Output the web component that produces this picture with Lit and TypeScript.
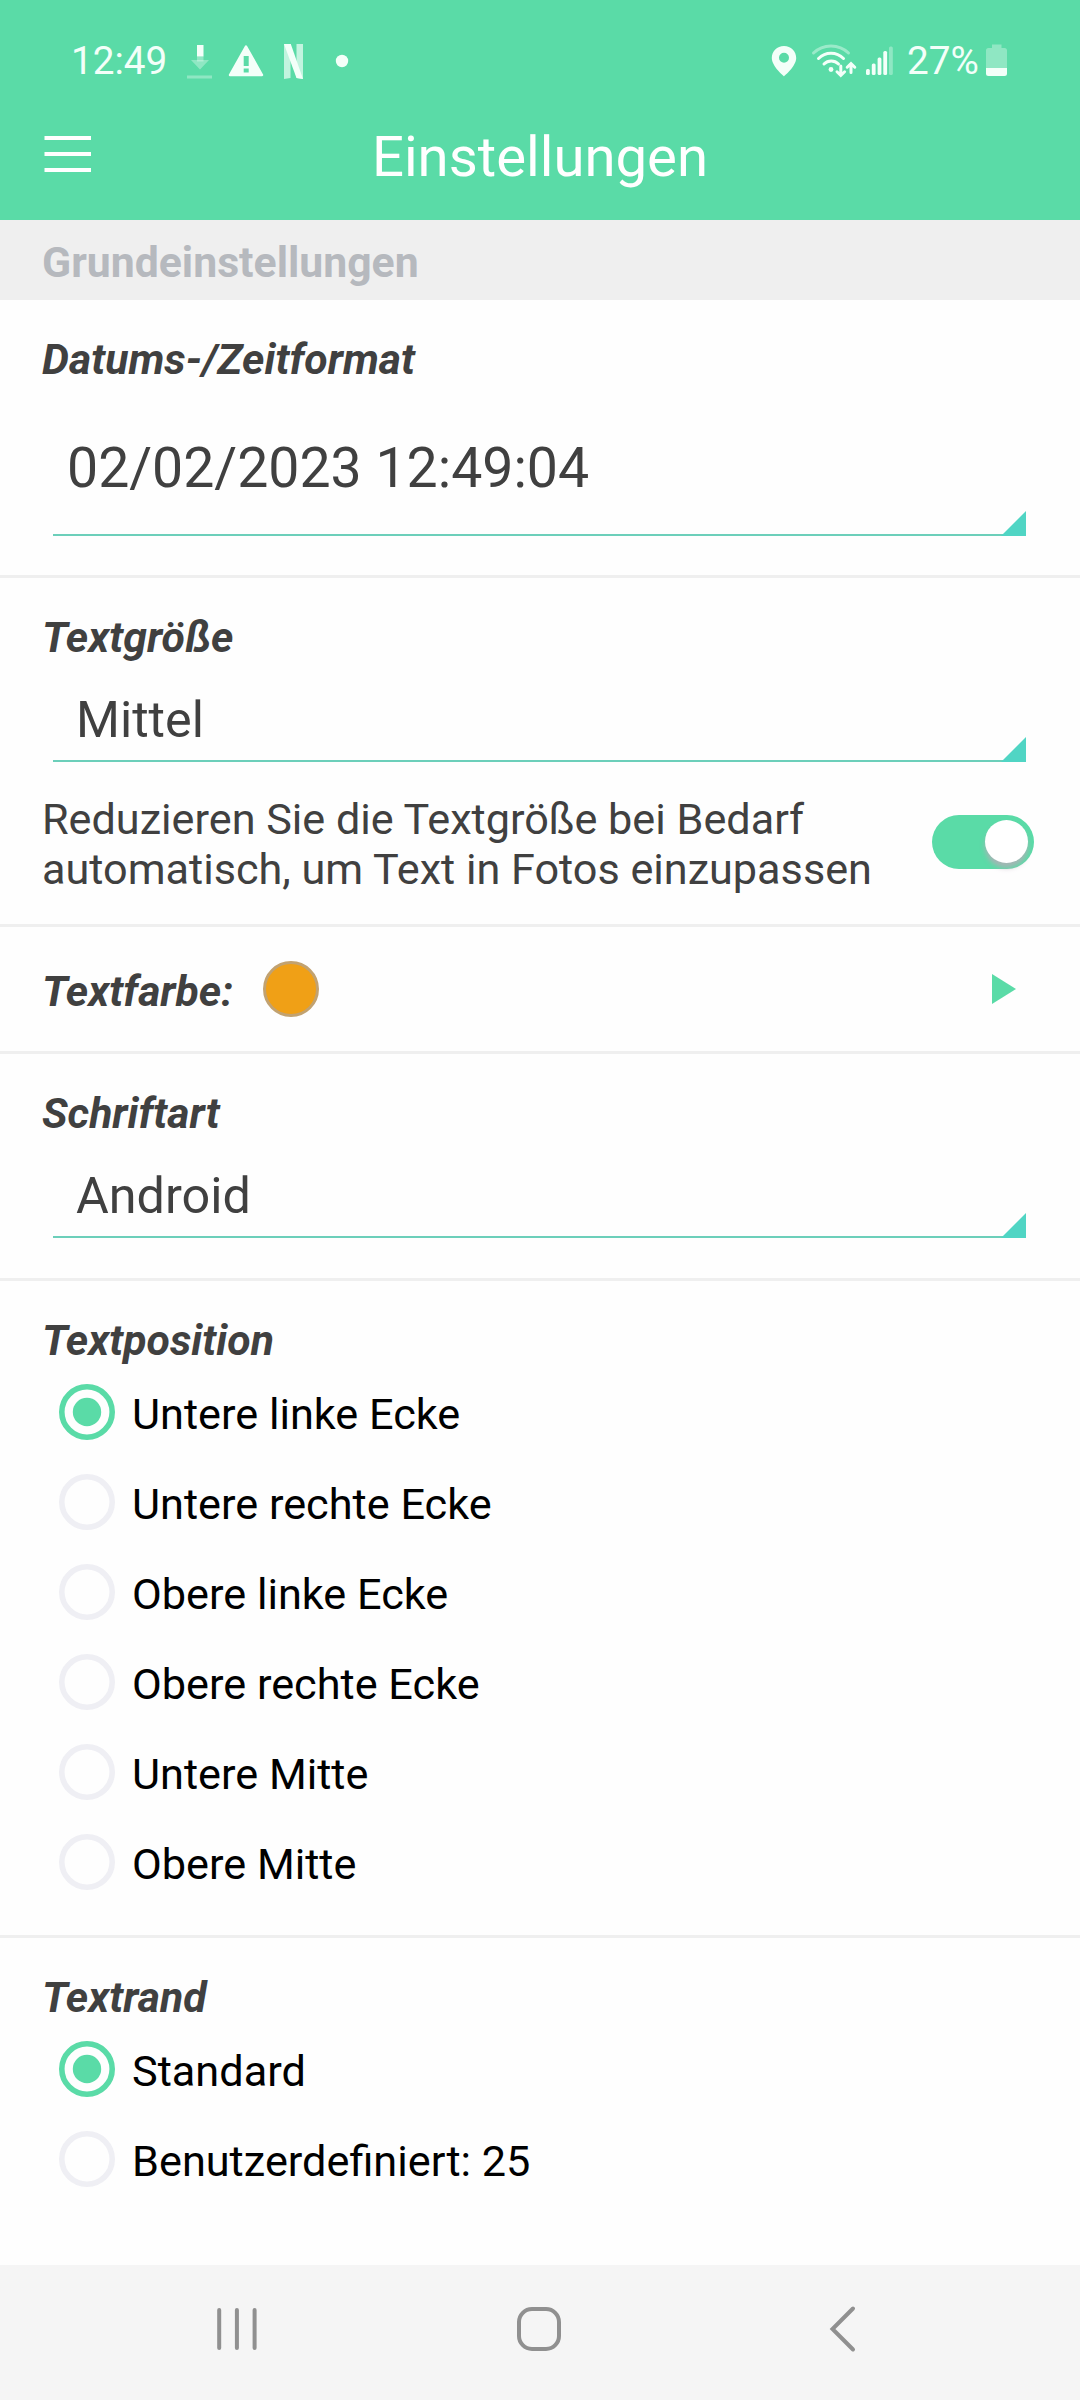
import { LitElement, html, css, svg, nothing } from "lit";
import { customElement, property, state } from "lit/decorators.js";

@customElement("status-bar")
class StatusBar extends LitElement {
  static styles = css`
    :host {
      display: block;
    }
    .bar {
      display: flex;
      align-items: center;
      box-sizing: border-box;
      height: 94px;
      padding: 28px 72px 0 71px;
      color: #f3fff9;
      font-size: 38.7px;
      line-height: 44px;
    }
    .icons {
      display: block;
      flex: none;
    }
    .time {
      width: 95px;
    }
    .left {
      margin-left: 16px;
    }
    .right {
      margin-left: auto;
    }
    .level {
      width: 73px;
      margin-left: 11px;
    }
    .battery {
      margin-left: 6px;
    }
  `;

  render() {
    return html`
      <div class="bar">
        <span class="time">12:49</span>
        <svg class="icons left" width="170" height="44" viewBox="182 39 170 44" fill="#f3fff9">
          <g opacity=".35">
            <path d="M191 60h18l-9 9.500z" />
            <rect x="187" y="75.500" width="25" height="3" />
          </g>
          <rect x="197" y="45" width="6.500" height="11.500" />
          <rect x="197" y="56.500" width="6.500" height="5" opacity=".35" />
          <path d="M246 46.500 262 75H230z" stroke="#f3fff9" stroke-width="2.500" stroke-linejoin="round" />
          <path d="M243.700 56h5v10h-5zM243.700 68.500h5v4h-5z" fill="#5adba7" />
          <path d="M284 44h6.500v34l-6.500 1zM296.500 44h6.500v35l-6.500-1z" opacity=".68" />
          <path d="M284 44h6.800L303 79l-6.500-1z" />
          <circle cx="342" cy="61" r="6.200" />
        </svg>
        <svg class="icons right" width="126" height="44" viewBox="770 39 126 44" fill="#f3fff9">
          <path
            fill-rule="evenodd"
            d="M784 46c-7 0-12.200 5.300-12.200 12 0 8.300 12.200 18.300 12.200 18.300S796.200 66.300 796.200 58c0-6.700-5.200-12-12.200-12zm0 6.800a5 5 0 1 1 0 10 5 5 0 0 1 0-10z"
          />
          <g fill="none" stroke="#f3fff9" stroke-width="3" stroke-linecap="round">
            <path d="M813.500 53c9.500-9.500 25.500-9.500 35 0" opacity=".42" />
            <path d="M818.500 58.500c7-7 18-7 25 0" />
            <path d="M824 64c4-4 10.500-4 14.500 0" />
            <path d="M840.800 66v9M837 71.800l3.800 3.700 3.800-3.700M851 72.500v-9M847.200 67.200l3.800-3.700 3.800 3.700" />
          </g>
          <circle cx="831" cy="69.500" r="2.400" />
          <rect x="866" y="69" width="3.800" height="6" rx="1.500" />
          <rect x="871.800" y="63.500" width="3.800" height="11.500" rx="1.500" />
          <rect x="877.600" y="57.500" width="3.800" height="17.500" rx="1.500" />
          <rect x="883.300" y="51" width="3.800" height="24" rx="1.500" />
          <rect x="889" y="46.500" width="3.800" height="28.500" rx="1.500" opacity=".35" />
        </svg>
        <span class="level">27%</span>
        <svg class="icons battery" width="22" height="44" viewBox="986 39 22 44" fill="#f3fff9">
          <path d="M992 44.500h9.500V48h3a2.500 2.500 0 0 1 2.500 2.500V68h-21V50.500a2.500 2.500 0 0 1 2.500-2.500h3.500z" opacity=".35" />
          <path d="M986 68h21v5.500a2.500 2.500 0 0 1-2.500 2.500h-16a2.500 2.500 0 0 1-2.500-2.500z" />
        </svg>
      </div>
    `;
  }
}

@customElement("select-field")
class SelectField extends LitElement {
  @property() value = "";
  @property({ type: Boolean, reflect: true }) large = false;

  static styles = css`
    :host {
      display: block;
      margin: 17px 54px 0 53px;
    }
    :host([large]) {
      margin-top: 18px;
    }
    .field {
      position: relative;
      display: flex;
      align-items: center;
      height: 80px;
      padding-left: 23px;
      border-bottom: 2px solid #6ccfba;
      font-size: 50.3px;
      line-height: 60px;
    }
    :host([large]) .field {
      height: 131px;
      padding-left: 14px;
      font-size: 55.4px;
    }
    .corner {
      position: absolute;
      right: 0;
      bottom: -2px;
    }
  `;

  render() {
    return html`
      <div class="field">
        <span>${this.value}</span>
        <svg class="corner" width="25" height="25" viewBox="0 0 25 25">
          <path d="M25 0V25H0z" fill="#50d5c4" />
        </svg>
      </div>
    `;
  }
}

@customElement("radio-list")
class RadioList extends LitElement {
  @property({ attribute: false }) options: string[] = [];
  @state() private selected = 0;

  static styles = css`
    :host {
      display: block;
      margin: 1px 0 0 59px;
    }
    .option {
      display: flex;
      align-items: center;
      gap: 17px;
      height: 90px;
      color: #000;
      font-size: 43.25px;
      line-height: 50px;
    }
    .dot {
      display: block;
      flex: none;
    }
    .label {
      padding-top: 5px;
    }
  `;

  render() {
    return this.options.map((label, i) => {
      const on = i === this.selected;
      return html`
        <div class="option" role="radio" aria-checked=${on} @click=${() => (this.selected = i)}>
          <svg class="dot" width="56" height="56" viewBox="0 0 56 56">
            <circle cx="28" cy="28" r="25.200" fill="none" stroke=${on ? "#5adba7" : "#efeff4"} stroke-width="5.600" />
            ${on ? svg`<circle cx="28" cy="28" r="14.200" fill="#5adba7" />` : nothing}
          </svg>
          <span class="label">${label}</span>
        </div>
      `;
    });
  }
}

@customElement("app-root")
class AppRoot extends LitElement {
  private positions = [
    "Untere linke Ecke",
    "Untere rechte Ecke",
    "Obere linke Ecke",
    "Obere rechte Ecke",
    "Untere Mitte",
    "Obere Mitte",
  ];
  private margins = ["Standard", "Benutzerdefiniert: 25"];

  static styles = css`
    :host {
      display: flex;
      flex-direction: column;
      width: 1080px;
      height: 2400px;
      overflow: hidden;
      background: #fefefe;
      color: #404040;
      font-family: Roboto, sans-serif;
      font-size: 43.2px;
      line-height: 50px;
    }
    .top {
      background: #5adba7;
    }
    .titlebar {
      display: grid;
      grid-template-columns: 91px 1fr 91px;
      align-items: center;
      height: 126px;
      color: #fff;
    }
    .menu {
      display: block;
      margin: -7px 0 0 44px;
    }
    .title {
      text-align: center;
      font-size: 56.3px;
      line-height: 66px;
    }
    .group {
      box-sizing: border-box;
      height: 80px;
      padding: 17px 42px 0;
      background: #efefef;
      color: #b6b9be;
      font-size: 42.75px;
      font-weight: 700;
    }
    .section {
      box-sizing: border-box;
      padding-top: 35px;
      border-bottom: 3px solid #efefef;
    }
    .date {
      height: 278px;
    }
    .size {
      height: 349px;
    }
    .font {
      height: 227px;
    }
    .position {
      height: 657px;
    }
    .margin {
      flex: 1;
      border-bottom: none;
    }
    .heading {
      padding: 0 0 2px 42px;
      font-size: 42.75px;
      line-height: 48px;
      font-weight: 700;
      font-style: italic;
    }
    .shrink {
      display: flex;
      justify-content: space-between;
      margin: 33px 46px 0 42px;
    }
    .toggle {
      box-sizing: border-box;
      display: flex;
      flex: none;
      justify-content: flex-end;
      width: 102px;
      height: 54px;
      margin-top: 20px;
      padding: 5px 6px;
      border-radius: 27px;
      background: #5adba7;
    }
    .knob {
      width: 43px;
      height: 43px;
      border-radius: 50%;
      background: #fff;
      box-shadow: 0 5px 5px rgba(190, 170, 185, 0.75);
    }
    .color {
      display: flex;
      align-items: center;
      height: 127px;
      padding: 0 64px 0 0;
    }
    .color .heading {
      padding-top: 5px;
    }
    .swatch {
      box-sizing: border-box;
      width: 56px;
      height: 56px;
      margin-left: 30px;
      border: 3px solid #c2a270;
      border-radius: 50%;
      background: #f0a016;
    }
    .play {
      display: block;
      margin-left: auto;
    }
    .nav {
      display: flex;
      box-sizing: border-box;
      height: 135px;
      padding: 40px 0 0 215px;
      background: #f5f5f5;
    }
    .home {
      margin-left: 256px;
    }
    .back {
      margin-left: 265px;
    }
  `;

  render() {
    return html`
      <header class="top">
        <status-bar></status-bar>
        <div class="titlebar">
          <svg class="menu" width="47" height="38" viewBox="0 0 47 38" stroke="#fff" stroke-width="4.200">
            <path d="M.500 3h46.500M.500 19h46.500M.500 35h46.500" />
          </svg>
          <div class="title">Einstellungen</div>
        </div>
      </header>
      <div class="group">Grundeinstellungen</div>
      <section class="section date">
        <div class="heading">Datums-/Zeitformat</div>
        <select-field large value="02/02/2023 12:49:04"></select-field>
      </section>
      <section class="section size">
        <div class="heading">Textgröße</div>
        <select-field value="Mittel"></select-field>
        <div class="shrink">
          <div>Reduzieren Sie die Textgröße bei Bedarf<br />automatisch, um Text in Fotos einzupassen</div>
          <div class="toggle"><div class="knob"></div></div>
        </div>
      </section>
      <section class="section color">
        <div class="heading">Textfarbe:</div>
        <div class="swatch"></div>
        <svg class="play" width="24" height="30" viewBox="0 0 24 30">
          <path d="M0 0 24 15 0 30z" fill="#5adba7" />
        </svg>
      </section>
      <section class="section font">
        <div class="heading">Schriftart</div>
        <select-field value="Android"></select-field>
      </section>
      <section class="section position">
        <div class="heading">Textposition</div>
        <radio-list .options=${this.positions}></radio-list>
      </section>
      <section class="section margin">
        <div class="heading">Textrand</div>
        <radio-list .options=${this.margins}></radio-list>
      </section>
      <nav class="nav">
        <svg width="44" height="48" viewBox="215 2305 44 48" stroke="#909090" stroke-width="4" stroke-linecap="round">
          <path d="M219.200 2310v38M236.900 2310v38M254.600 2310v38" />
        </svg>
        <svg class="home" width="48" height="48" viewBox="515 2305 48 48" fill="none" stroke="#909090" stroke-width="4">
          <rect x="519" y="2309" width="40" height="40" rx="13" />
        </svg>
        <svg class="back" width="30" height="48" viewBox="828 2305 30 48" fill="none" stroke="#909090" stroke-width="4" stroke-linecap="round">
          <path d="M853 2308.500 832.500 2329 853 2349.500" />
        </svg>
      </nav>
    `;
  }
}
